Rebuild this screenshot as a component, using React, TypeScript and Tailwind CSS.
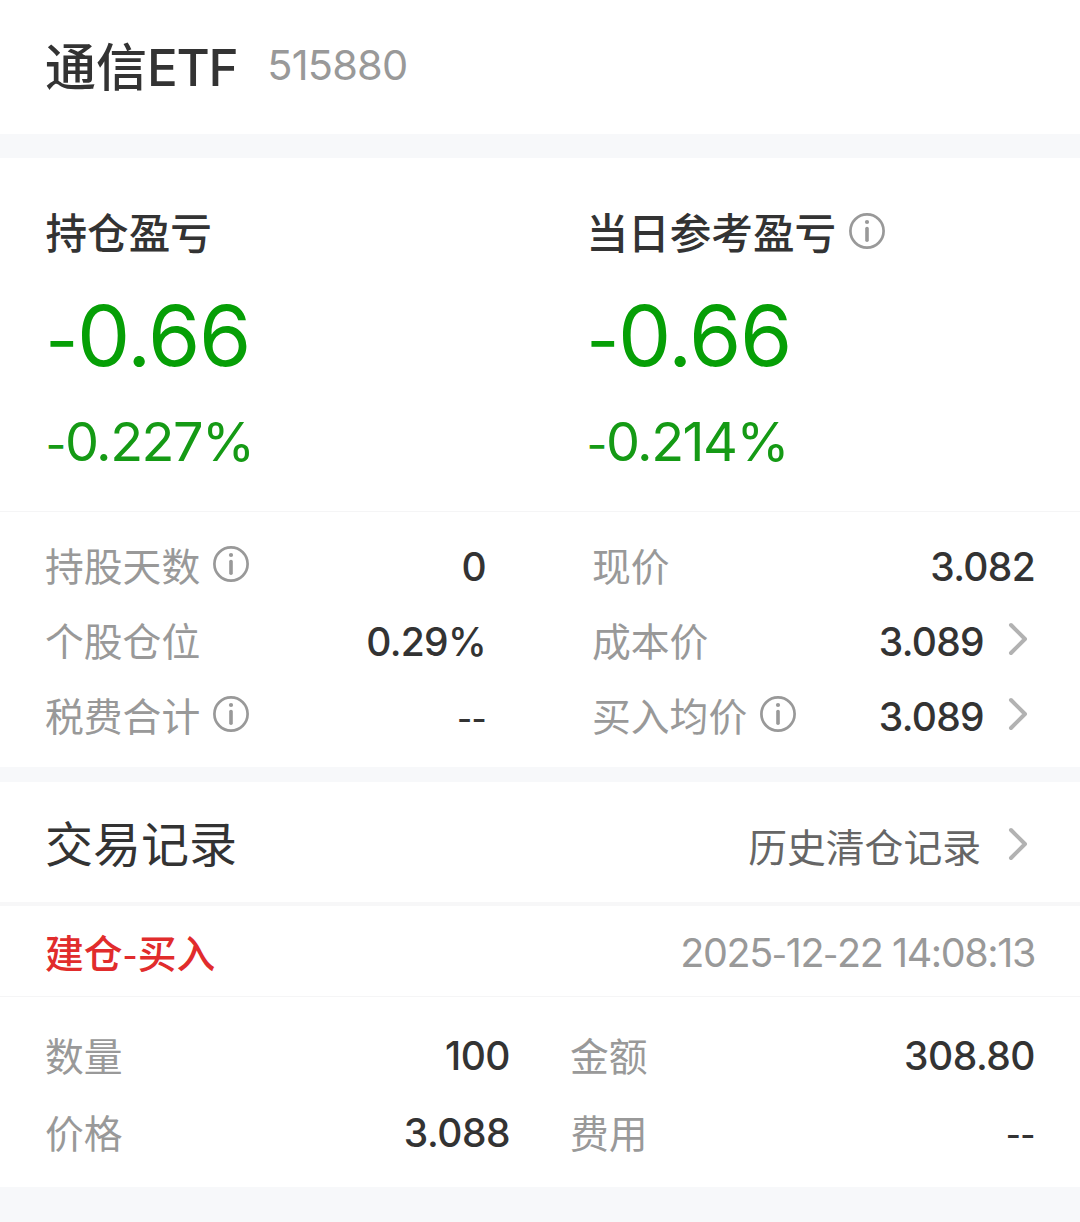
import React from 'react';

interface StatItem {
  label: string;
  value: string;
  info?: boolean;
  link?: boolean;
}

const leftStats: StatItem[] = [
  { label: '持股天数', value: '0', info: true },
  { label: '个股仓位', value: '0.29%' },
  { label: '税费合计', value: '--', info: true },
];

const rightStats: StatItem[] = [
  { label: '现价', value: '3.082' },
  { label: '成本价', value: '3.089', link: true },
  { label: '买入均价', value: '3.089', info: true, link: true },
];

const leftTrade: StatItem[] = [
  { label: '数量', value: '100' },
  { label: '价格', value: '3.088' },
];

const rightTrade: StatItem[] = [
  { label: '金额', value: '308.80' },
  { label: '费用', value: '--' },
];

function InfoIcon() {
  return (
    <svg width="36" height="36" viewBox="0 0 36 36" fill="none" className="shrink-0">
      <circle cx="18" cy="18" r="16.6" stroke="#999999" strokeWidth="2.7" />
      <circle cx="18" cy="9" r="2.1" fill="#999999" />
      <path d="M18 15.6v11.6" stroke="#999999" strokeWidth="3.6" strokeLinecap="round" />
    </svg>
  );
}

function ChevronIcon() {
  return (
    <svg width="20" height="34" viewBox="0 0 20 34" fill="none" className="shrink-0">
      <path d="M3 3l14 14L3 31" stroke="#b2b2b2" strokeWidth="4" strokeLinecap="round" strokeLinejoin="round" />
    </svg>
  );
}

// Inter's hyphen is wide, so it is set a bit smaller than the digits
function Num({ text }: { text: string }) {
  return (
    <>
      {text.split(/(-)/).map((part, i) => (part === '-' ? <span key={i} className="text-[0.84em] leading-none">-</span> : part))}
    </>
  );
}

function StatRow({ item }: { item: StatItem }) {
  return (
    <div className="flex h-[75px] items-center">
      <span className="mt-[3px] text-[38.8px] leading-[72px] text-[#999999]">{item.label}</span>
      {item.info && (
        <span className="ml-[13px] pb-[4px]">
          <InfoIcon />
        </span>
      )}
      <span className="mt-[2px] ml-auto text-[39px] leading-[73px] font-medium tracking-[-0.7px] text-[#333333]">
        <Num text={item.value} />
      </span>
      {item.link && (
        <span className="mr-[7px] ml-[24px] pb-[4px]">
          <ChevronIcon />
        </span>
      )}
    </div>
  );
}

function TradeRow({ item }: { item: StatItem }) {
  return (
    <div className="flex h-[77px] items-center justify-between leading-[75px]">
      <span className="mt-[1px] text-[38.8px] text-[#999999]">{item.label}</span>
      <span className="text-[39px] font-medium tracking-[-0.5px] text-[#333333]">
        <Num text={item.value} />
      </span>
    </div>
  );
}

function ProfitBlock({ title, amount, percent, info }: { title: string; amount: string; percent: string; info?: boolean }) {
  return (
    <div className="flex w-[541px] shrink-0 flex-col">
      <div className="flex h-[60px] items-center">
        <h2 className="mt-[3px] text-[41.6px] leading-[57px] font-medium text-[#333333]">{title}</h2>
        {info && (
          <span className="ml-[13px] pb-[4px]">
            <InfoIcon />
          </span>
        )}
      </div>
      <p className="mt-[22px] text-[84.5px] leading-[100px] tracking-[-1.2px] text-[#069f06]">
        <Num text={amount} />
      </p>
      <p className="mt-[22px] text-[54px] leading-[70px] tracking-[-1.5px] text-[#159a15]">
        <Num text={percent} />
      </p>
    </div>
  );
}

export default function App() {
  return (
    <div className="h-[1222px] w-[1080px] overflow-hidden bg-[#f7f8fa] font-['Inter','Noto_Sans_CJK_SC',sans-serif] whitespace-nowrap">
      {/* Header */}
      <header className="flex h-[134px] items-center bg-white pl-[45px]">
        <h1 className="mt-[2px] text-[51px] leading-[132px] font-medium text-[#333333]">
          通信<span className="tracking-[-1.3px]">ETF</span>
        </h1>
        <span className="mb-[3px] ml-[30px] text-[41.5px] leading-[131px] tracking-[-0.8px] text-[#999999]">515880</span>
      </header>

      {/* Profit */}
      <section className="mt-[24px] flex h-[354px] border-b border-[#f5f5f6] bg-white pt-[45px] pl-[45.5px]">
        <ProfitBlock title="持仓盈亏" amount="-0.66" percent="-0.227%" />
        <ProfitBlock title="当日参考盈亏" amount="-0.66" percent="-0.214%" info />
      </section>

      <section className="flex h-[255px] bg-white pt-[16px] pl-[45px]">
        <div className="w-[441px]">
          {leftStats.map((item) => (
            <StatRow key={item.label} item={item} />
          ))}
        </div>
        <div className="ml-[106px] w-[443px]">
          {rightStats.map((item) => (
            <StatRow key={item.label} item={item} />
          ))}
        </div>
      </section>

      {/* Trade records */}
      <section className="mt-[15px] flex h-[124px] items-center border-b-4 border-[#f7f7f8] bg-white pr-[52px] pl-[45px]">
        <h2 className="mt-[6px] text-[48px] leading-[114px] text-[#333333]">交易记录</h2>
        <span className="mt-[11px] ml-auto text-[38.8px] leading-[109px] text-[#666666]">历史清仓记录</span>
        <span className="mt-[4px] ml-[27px]">
          <ChevronIcon />
        </span>
      </section>

      <section className="flex h-[91px] items-center justify-between border-b border-[#f5f5f6] bg-white pr-[45px] pl-[45px]">
        <span className="mt-[6px] text-[38.8px] leading-[84px] font-medium text-[#e12c2c]">
          建仓<Num text="-" />买入
        </span>
        <span className="mt-[5px] text-[39.5px] leading-[85px] tracking-[-1.4px] text-[#999999]">
          <Num text="2025-12-22 14:08:13" />
        </span>
      </section>

      <section className="flex h-[190px] bg-white pt-[20px] pl-[45px]">
        <div className="w-[465px]">
          {leftTrade.map((item) => (
            <TradeRow key={item.label} item={item} />
          ))}
        </div>
        <div className="ml-[60px] w-[465px]">
          {rightTrade.map((item) => (
            <TradeRow key={item.label} item={item} />
          ))}
        </div>
      </section>
    </div>
  );
}
